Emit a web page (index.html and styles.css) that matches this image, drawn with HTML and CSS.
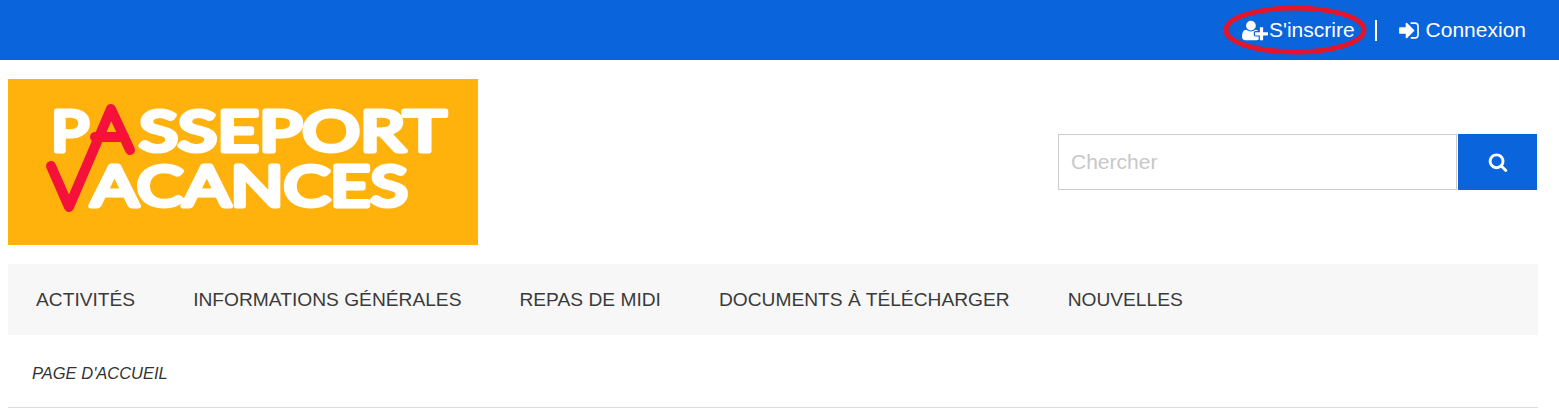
FILE: index.html

```html
<!DOCTYPE html>
<html>
<head>
  <meta charset="utf-8" />
  <meta name="viewport" content="width=device-width, initial-scale=1" />
  <title>Passeport Vacances</title>
  <link rel="stylesheet" href="styles.css">
</head>
<body>
  <div class="topbar">
    <a class="top-link signup" href="#">
      <svg class="icon-user" viewBox="0 0 2048 1792"><path fill="currentColor" d="M704 896q-159 0-271.500-112.500t-112.500-271.500 112.500-271.500 271.500-112.500 271.500 112.500 112.500 271.500-112.500 271.500-271.500 112.500zm960 128h352q13 0 22.500 9.500t9.500 22.500v192q0 13-9.500 22.500t-22.500 9.500h-352v352q0 13-9.500 22.500t-22.500 9.500h-192q-13 0-22.500-9.500t-9.500-22.500v-352h-352q-13 0-22.500-9.500t-9.500-22.500v-192q0-13 9.500-22.500t22.500-9.500h352v-352q0-13 9.500-22.500t22.500-9.500h192q13 0 22.500 9.500t9.500 22.500v352zm-736 224q0 52 38 90t90 38h256v238q-68 50-171 50h-874q-121 0-194-69t-73-190q0-53 3.500-103.500t14-109 26.500-108.500 43-97.500 62-81 85.500-53.500 111.500-20q19 0 39 17 79 61 154.500 91.500t164.500 30.500 164.500-30.500 154.500-91.500q20-17 39-17 132 0 217 96h-223q-52 0-90 38t-38 90v192z"/></svg>
      <span>S'inscrire</span>
      <svg class="circled" viewBox="0 0 144 50"><ellipse cx="72" cy="25" rx="69" ry="22"/></svg>
    </a>
    <span class="top-sep"></span>
    <a class="top-link" href="#">
      <svg class="icon-signin" viewBox="0 0 1536 1792"><path fill="currentColor" d="M1184 896q0 26-19 45l-544 544q-19 19-45 19t-45-19-19-45v-288h-448q-26 0-45-19t-19-45v-384q0-26 19-45t45-19h448v-288q0-26 19-45t45-19 45 19l544 544q19 19 19 45zm352-352v704q0 119-84.500 203.500t-203.500 84.500h-320q-13 0-22.500-9.500t-9.500-22.500q0-4-1-20t-.5-26.500 3-23.500 10-19.500 20.500-6.500h320q66 0 113-47t47-113v-704q0-66-47-113t-113-47h-312l-11.500-1-11.500-3-8-5.500-7-9-2-13.500q0-4-1-20t-.5-26.500 3-23.500 10-19.500 20.500-6.500h320q119 0 203.500 84.500t84.500 203.500z"/></svg>
      <span>Connexion</span>
    </a>
  </div>

  <div class="page">
    <div class="header">
      <svg class="logo" viewBox="0 0 470 166" role="img" aria-label="Passeport Vacances">
        <rect width="470" height="166" fill="#ffb10c"/>
        <g class="logo-text">
          <text x="43" y="72" textLength="38" lengthAdjust="spacingAndGlyphs">P</text>
          <text x="131" y="72" textLength="307" lengthAdjust="spacingAndGlyphs">SSEPORT</text>
          <text x="83" y="127" textLength="317" lengthAdjust="spacingAndGlyphs">ACANCES</text>
        </g>
        <g class="logo-mark">
          <polyline points="43,87 61,128 103,30 122,71"/>
          <line x1="87" y1="58" x2="116" y2="58"/>
        </g>
      </svg>
      <form class="search">
        <input type="text" placeholder="Chercher" />
        <button type="button">
          <svg viewBox="0 0 1792 1792"><path fill="currentColor" d="M1216 832q0-185-131.500-316.500t-316.500-131.500-316.500 131.500-131.500 316.500 131.500 316.500 316.500 131.500 316.500-131.500 131.500-316.500zm512 832q0 52-38 90t-90 38q-54 0-90-38l-343-342q-179 124-399 124-143 0-273.500-55.500t-225-150-150-225-55.500-273.500 55.500-273.500 150-225 225-150 273.500-55.500 273.500 55.500 225 150 150 225 55.500 273.500q0 220-124 399l343 343q37 37 37 90z"/></svg>
        </button>
      </form>
    </div>

    <ul class="nav">
      <li><a href="#">ACTIVITÉS</a></li>
      <li><a href="#">INFORMATIONS GÉNÉRALES</a></li>
      <li><a href="#">REPAS DE MIDI</a></li>
      <li><a href="#">DOCUMENTS À TÉLÉCHARGER</a></li>
      <li><a href="#">NOUVELLES</a></li>
    </ul>

    <div class="breadcrumb">PAGE D'ACCUEIL</div>
  </div>
</body>
</html>
```

FILE: styles.css

```css
body {
  font-family: "Liberation Sans", Arial, sans-serif;
  margin: 0;
  background-color: #fff;
  color: #333;
  overflow: hidden;
}
a {
  color: inherit;
  text-decoration: none;
}
.topbar {
  display: flex;
  justify-content: flex-end;
  align-items: center;
  height: 60px;
  padding-right: 33px;
  background: #0a64dc;
  color: #fff;
  font-size: 21px;
}
.top-link {
  display: flex;
  align-items: center;
  position: relative;
}
.icon-user {
  width: 26px;
  height: 23px;
  margin-right: 1px;
}
.icon-signin {
  width: 20px;
  height: 23px;
  margin-right: 7px;
}
.circled {
  position: absolute;
  left: -19px;
  top: -13px;
  width: 144px;
  height: 50px;
  fill: none;
  stroke: #e2152b;
  stroke-width: 5;
}
.top-sep {
  width: 2px;
  height: 21px;
  margin: 0 22px 0 20px;
  background: #fff;
}
.page {
  padding: 19px 21px 0 8px;
}
.header {
  display: flex;
  justify-content: space-between;
  align-items: flex-start;
  margin-bottom: 19px;
}
.logo {
  display: block;
  width: 470px;
  height: 166px;
}
.logo-text {
  font-family: Lato, "Liberation Sans", sans-serif;
  font-size: 57px;
  font-weight: 400;
  fill: #fff;
  stroke: #fff;
  stroke-width: 5;
  stroke-linejoin: round;
  stroke-linecap: round;
}
.logo-mark {
  fill: none;
  stroke: #f5123a;
  stroke-width: 10;
  stroke-linecap: round;
  stroke-linejoin: round;
}
.search {
  display: flex;
  gap: 1px;
  margin-top: 55px;
  margin-right: 1px;
}
.search input {
  box-sizing: border-box;
  width: 399px;
  height: 56px;
  padding: 0 12px;
  border: 1px solid #ccc;
  font-family: inherit;
  font-size: 21px;
  color: #333;
}
.search input::placeholder {
  color: #c8c8c8;
  opacity: 1;
}
.search button {
  display: flex;
  justify-content: center;
  align-items: center;
  width: 79px;
  height: 56px;
  padding: 0;
  border: none;
  background: #0a64dc;
  color: #fff;
}
.search button svg {
  width: 20px;
  height: 20px;
}
.nav {
  display: flex;
  height: 71px;
  margin: 0;
  padding: 0 0 0 28px;
  gap: 58px;
  align-items: center;
  list-style: none;
  background: #f7f7f7;
  font-size: 19.2px;
  color: #3a3a3a;
}
.breadcrumb {
  height: 72px;
  padding-left: 24px;
  line-height: 76px;
  border-bottom: 1px solid #ddd;
  font-size: 16.5px;
  font-style: italic;
}
```
